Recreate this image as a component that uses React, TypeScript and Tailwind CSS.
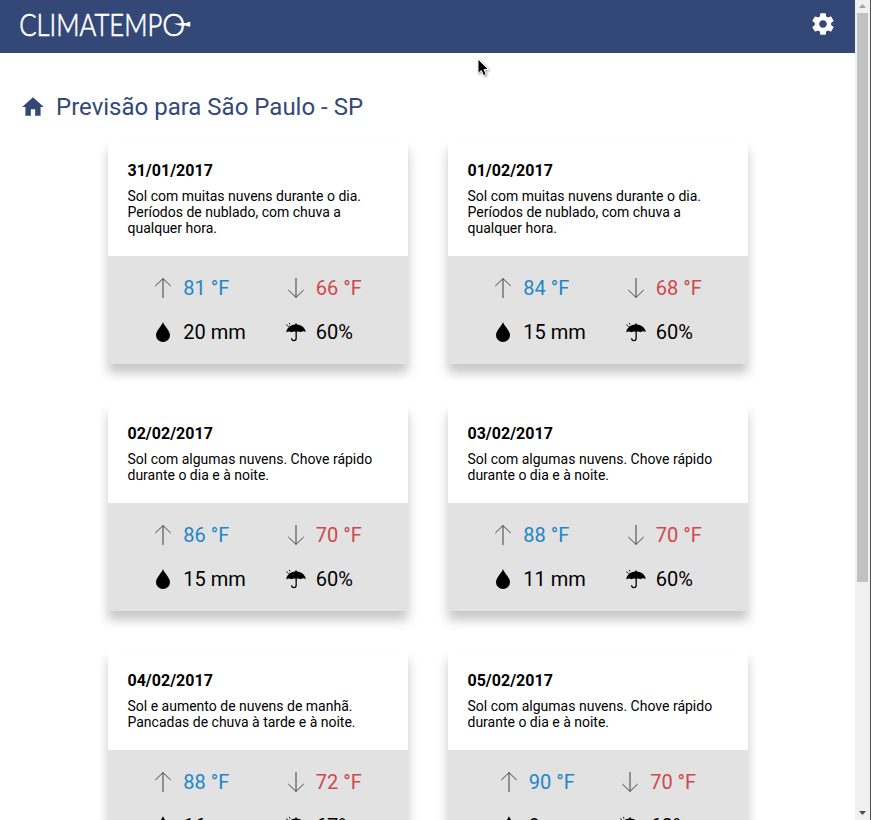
type Day = {
  date: string;
  text: string;
  max: number;
  min: number;
  rain: number;
  chance: number;
};

const days: Day[] = [
  { date: '31/01/2017', text: 'Sol com muitas nuvens durante o dia. Períodos de nublado, com chuva a qualquer hora.', max: 81, min: 66, rain: 20, chance: 60 },
  { date: '01/02/2017', text: 'Sol com muitas nuvens durante o dia. Períodos de nublado, com chuva a qualquer hora.', max: 84, min: 68, rain: 15, chance: 60 },
  { date: '02/02/2017', text: 'Sol com algumas nuvens. Chove rápido durante o dia e à noite.', max: 86, min: 70, rain: 15, chance: 60 },
  { date: '03/02/2017', text: 'Sol com algumas nuvens. Chove rápido durante o dia e à noite.', max: 88, min: 70, rain: 11, chance: 60 },
  { date: '04/02/2017', text: 'Sol e aumento de nuvens de manhã. Pancadas de chuva à tarde e à noite.', max: 88, min: 72, rain: 16, chance: 67 },
  { date: '05/02/2017', text: 'Sol com algumas nuvens. Chove rápido durante o dia e à noite.', max: 90, min: 70, rain: 9, chance: 60 },
];

function Logo() {
  return (
    <svg width="172" height="28" viewBox="0 0 172 28" className="block overflow-visible" fill="white">
      <text
        x="-0.8"
        y="25"
        textLength="143"
        lengthAdjust="spacingAndGlyphs"
        className="font-['Lato','Liberation_Sans',sans-serif] text-[32px] font-light"
        stroke="white"
        strokeWidth="0.7"
      >
        CLIMATEMP
      </text>
      <text
        x="142.200"
        y="25"
        textLength="23"
        lengthAdjust="spacingAndGlyphs"
        className="font-['Lato','Liberation_Sans',sans-serif] text-[32px] font-light"
        stroke="white"
        strokeWidth="0.7"
      >
        O
      </text>
      <path d="M153.500 12.800L163 12L167 12L168 11L170.300 11V15.500H168L167 14.700L160 14.400Z" />
    </svg>
  );
}

function Gear() {
  return (
    <svg width="26" height="26" viewBox="0 0 24 24" fill="white" className="mb-0.5">
      <path d="M19.43 12.98c.04-.32.07-.64.07-.98s-.03-.66-.07-.98l2.11-1.65c.19-.15.24-.42.12-.64l-2-3.46c-.12-.22-.39-.3-.61-.22l-2.49 1c-.52-.4-1.08-.73-1.69-.98l-.38-2.65C14.46 2.18 14.25 2 14 2h-4c-.25 0-.46.18-.49.42l-.38 2.65c-.61.25-1.17.59-1.69.98l-2.49-1c-.23-.09-.49 0-.61.22l-2 3.46c-.13.22-.07.49.12.64l2.11 1.65c-.04.32-.07.65-.07.98s.03.66.07.98l-2.11 1.65c-.19.15-.24.42-.12.64l2 3.46c.12.22.39.3.61.22l2.49-1c.52.4 1.08.73 1.69.98l.38 2.65c.03.24.24.42.49.42h4c.25 0 .46-.18.49-.42l.38-2.65c.61-.25 1.17-.59 1.69-.98l2.49 1c.23.09.49 0 .61-.22l2-3.46c.12-.22.07-.49-.12-.64l-2.11-1.65zM12 15.5c-1.93 0-3.5-1.57-3.5-3.5s1.57-3.5 3.5-3.5 3.5 1.57 3.5 3.5-1.57 3.5-3.5 3.5z" />
    </svg>
  );
}

function House() {
  return (
    <svg width="26" height="26" viewBox="0 0 24 24" fill="#344878">
      <path d="M10 20v-6h4v6h5v-8h3L12 3 2 12h3v8z" />
    </svg>
  );
}

function Arrow({ down = false }: { down?: boolean }) {
  return (
    <svg width="20" height="20" viewBox="0 0 20 20" fill="none" className={down ? 'rotate-180' : ''}>
      <path d="M10 0.5V20" stroke="#8c8c8c" strokeWidth="1.9" />
      <path d="M2.3 8L10 0.6L17.7 8" stroke="#444" strokeWidth="1" />
    </svg>
  );
}

function Drop() {
  return (
    <svg width="20" height="20" viewBox="0 0 20 20">
      <path d="M10 0C11 3.6 17 8.500 17 13.200A7 6.800 0 0 1 3 13.200C3 8.500 9 3.600 10 0Z" />
    </svg>
  );
}

function Umbrella() {
  return (
    <svg width="20" height="20" viewBox="0 0 20 20">
      <path d="M0.300 10.600C0.600 6 4.500 2.900 9.300 2.600V1.500H10.800V2.600C15.500 2.900 19.400 6 19.700 10.200C18.500 8.900 16 8.900 14.600 10.300C13.600 9.600 12 9.300 10.800 9.700V16.300A2.900 2.900 0 0 1 5 16.300H6.200A1.600 1.600 0 0 0 9.500 16.300V9.700C8 9.300 6.600 9.600 5.500 10.300C4 9.300 1.800 9.100 0.300 10.600Z" />
      <path d="M0.700 2.400L1.500 4.200M3.300 0.900L4 2.500M3.200 3.800L2.700 5" stroke="black" strokeWidth="0.900" />
    </svg>
  );
}

function Card({ day }: { day: Day }) {
  return (
    <article className="w-[300px] shadow-[0_9px_10px_rgba(0,0,0,0.22)]">
      <div className="bg-white p-5">
        <h2 className="mb-2 text-base leading-[19px] font-bold">{day.date}</h2>
        <p className="text-sm leading-4">{day.text}</p>
      </div>
      <div className="flex justify-center gap-10 bg-[#e2e2e2] py-5 text-xl leading-6">
        <div className="flex flex-col gap-5">
          <div className="flex items-center gap-2.5 text-[#1f86c7]"><Arrow />{day.max} °F</div>
          <div className="flex items-center gap-2.5"><Drop />{day.rain} mm</div>
        </div>
        <div className="flex flex-col gap-5">
          <div className="flex items-center gap-2.5 text-[#d0474c]"><Arrow down />{day.min} °F</div>
          <div className="flex items-center gap-2.5"><Umbrella />{day.chance}%</div>
        </div>
      </div>
    </article>
  );
}

function Scrollbar() {
  return (
    <div className="flex w-4 flex-none flex-col items-center border-r border-[#505050] bg-[#f0f0f0]">
      <svg width="15" height="13" viewBox="0 0 15 13"><path d="M4 8H11L7.500 4Z" fill="#a3a3a3" /></svg>
      <div className="h-[569px] w-[11px] bg-[#c1c1c1]" />
      <svg width="15" height="13" viewBox="0 0 15 13" className="mt-auto"><path d="M4 4H11L7.500 8Z" fill="#505050" /></svg>
    </div>
  );
}

export default function App() {
  return (
    <div className="relative flex h-[820px] overflow-hidden bg-white font-['Roboto',sans-serif] text-black">
      <div className="h-full flex-1 overflow-hidden">
        <header className="flex h-[53px] items-center justify-between bg-[#344878] pr-[19px] pb-1 pl-5">
          <Logo />
          <Gear />
        </header>
        <main>
          <h1 className="flex h-[88px] items-center gap-2.5 pt-5 pl-5 text-2xl leading-7 text-[#344878]">
            <House />
            Previsão para São Paulo - SP
          </h1>
          <div className="ml-[107.5px] flex w-[641px] flex-wrap gap-10">
            {days.map((day) => <Card key={day.date} day={day} />)}
          </div>
        </main>
      </div>
      <Scrollbar />
      <svg width="14" height="20" viewBox="0 0 14 20" className="absolute top-[58px] left-[477px] drop-shadow-[1px_1px_1px_rgba(0,0,0,0.4)]">
        <path d="M1 1V15.500L4.300 12.500L6.600 17.700L9.200 16.500L7 11.500H11.500Z" fill="black" stroke="white" strokeWidth="1" />
      </svg>
    </div>
  );
}
